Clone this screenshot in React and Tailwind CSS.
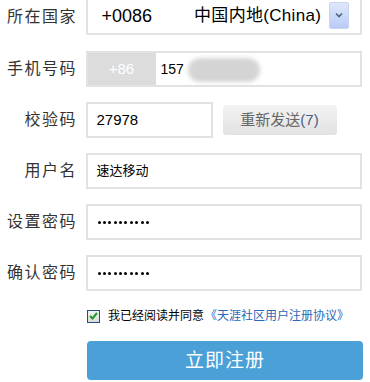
const font = {
  fontFamily:
    '"Liberation Sans", "Noto Sans CJK SC", sans-serif',
};

function Label({ children }) {
  return (
    <div className="w-[77px] shrink-0 text-right text-[16px] tracking-[1.5px] text-[#333] leading-none mr-[-1.5px]">
      {children}
    </div>
  );
}

function Box({ children, className = "" }) {
  return (
    <div
      className={
        "h-[36px] border-2 border-[#e2e2e2] bg-white flex items-center " +
        className
      }
    >
      {children}
    </div>
  );
}

function Dots() {
  return (
    <div className="flex gap-[2.4px] pl-[10px]">
      {Array.from({ length: 10 }).map((_, i) => (
        <span
          key={i}
          className="w-[3px] h-[3px] rounded-full bg-black"
        />
      ))}
    </div>
  );
}

export default function App() {
  return (
    <div
      className="w-[370px] h-[382px] bg-white overflow-hidden"
      style={font}
    >
      <div className="mt-[-1px] flex flex-col gap-[15px]">
        <div className="flex items-center gap-[10px] mb-[1px]">
          <Label>所在国家</Label>
          <Box className="w-[276px] border-t-0 h-[35px]">
            <span className="ml-[14px] text-[18px] text-black">
              +0086
            </span>
            <span className="ml-[42px] text-[17px] text-black tracking-[0.3px]">
              中国内地(China)
            </span>
            <div className="ml-[8px] w-[20px] h-[27px] rounded-[2px] bg-gradient-to-b from-[#dfe8fb] to-[#b9cbf5] border border-[#c8d5f2] flex items-center justify-center mt-[-2px]">
              <svg width="8" height="6" viewBox="0 0 8 6">
                <path
                  d="M1 1.5 L4 4.5 L7 1.5"
                  fill="none"
                  stroke="#4d6185"
                  strokeWidth="1.6"
                />
              </svg>
            </div>
          </Box>
        </div>

        <div className="flex items-center gap-[10px]">
          <Label>手机号码</Label>
          <Box className="w-[276px] relative">
            <div className="w-[68px] h-full bg-[#dcdcdc] flex items-center justify-center text-white text-[15px]">
              +86
            </div>
            <span className="ml-[5px] text-[14px] text-black">157</span>
            <div className="absolute left-[100px] top-[5px] w-[72px] h-[24px] rounded-[12px] bg-[#d4d4d4] blur-[2px]" />
          </Box>
        </div>

        <div className="flex items-center gap-[10px]">
          <Label>校验码</Label>
          <Box className="w-[127px]">
            <span className="ml-[9px] text-[15px] text-black">27978</span>
          </Box>
          <div className="w-[114px] h-[30px] rounded-[3px] bg-gradient-to-b from-[#f3f3f3] to-[#e2e2e2] flex items-center justify-center text-[15px] text-[#666]">
            重新发送<span className="text-[#4a5d82]">(7)</span>
          </div>
        </div>

        <div className="flex items-center gap-[10px]">
          <Label>用户名</Label>
          <Box className="w-[276px]">
            <span className="ml-[9px] text-[13px] text-black">速达移动</span>
          </Box>
        </div>

        <div className="flex items-center gap-[10px]">
          <Label>设置密码</Label>
          <Box className="w-[276px]">
            <Dots />
          </Box>
        </div>

        <div className="flex items-center gap-[10px]">
          <Label>确认密码</Label>
          <Box className="w-[276px]">
            <Dots />
          </Box>
        </div>
      </div>

      <div className="ml-[87px] mt-[18px] h-[14px] flex items-center leading-none">
        <div className="w-[13px] h-[13px] border border-[#1f4f86] bg-gradient-to-b from-[#f2f2f2] to-[#dcdcdc] flex items-center justify-center">
          <svg width="9" height="8" viewBox="0 0 9 8">
            <path
              d="M1 4 L3.5 6.5 L8 1"
              fill="none"
              stroke="#1f9a2a"
              strokeWidth="2"
            />
          </svg>
        </div>
        <span className="ml-[8px] text-[12px] text-black">
          我已经阅读并同意
        </span>
        <span className="ml-[1px] text-[12px] text-[#2a68b8]">
          《天涯社区用户注册协议》
        </span>
      </div>

      <div className="ml-[87px] mt-[18px] w-[276px] h-[39px] rounded-[4px] bg-[#4aa0d7] flex items-center justify-center text-white text-[19px] tracking-[1px] leading-none">
        立即注册
      </div>
    </div>
  );
}
